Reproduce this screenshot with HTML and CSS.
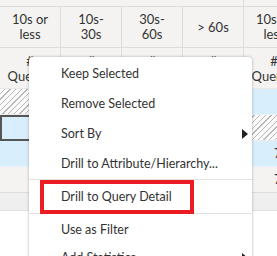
FILE: index.html
```html
<!DOCTYPE html>
<html>
<head>
<meta charset="utf-8">
<link rel="stylesheet" href="styles.css">
</head>
<body>
<div class="table">
  <div class="strip wide"></div>
  <div class="strip"></div>

  <div class="hcell">10s or<br>less</div>
  <div class="hcell">10s-<br>30s</div>
  <div class="hcell">30s-<br>60s</div>
  <div class="hcell">&gt; 60s</div>
  <div class="hcell">10s or<br>less</div>

  <div class="hcell h2">#<br>Queries</div>
  <div class="hcell h2">#<br>Queries</div>
  <div class="hcell h2">#<br>Queries</div>
  <div class="hcell h2">#<br>Queries</div>
  <div class="hcell h2 last">#<br>Queries</div>

  <div class="cell hatch"></div>
  <div class="cell blue"></div>
  <div class="cell blue"></div>
  <div class="cell blue"></div>
  <div class="cell blue"></div>

  <div class="cell blue selected"></div>
  <div class="cell blue"></div>
  <div class="cell blue"></div>
  <div class="cell blue"></div>
  <div class="cell hatch"></div>

  <div class="cell blue"></div>
  <div class="cell blue"></div>
  <div class="cell blue"></div>
  <div class="cell blue"></div>
  <div class="cell blue num">7</div>

  <div class="cell grey"></div>
  <div class="cell grey"></div>
  <div class="cell grey"></div>
  <div class="cell grey"></div>
  <div class="cell grey num">7</div>

  <div class="cell total"></div>
  <div class="cell total"></div>
  <div class="cell total"></div>
  <div class="cell total"></div>
  <div class="cell total"></div>
</div>

<div class="menu">
  <div class="item">Keep Selected</div>
  <div class="item">Remove Selected</div>
  <div class="item sub">Sort By</div>
  <div class="item">Drill to Attribute/Hierarchy...</div>
  <div class="sep"></div>
  <div class="item highlighted">Drill to Query Detail<span class="callout"></span></div>
  <div class="sep"></div>
  <div class="item short">Use as Filter</div>
  <div class="item sub">Add Statistics</div>
</div>
</body>
</html>
```
FILE: styles.css
```css
html, body {
  margin: 0;
  padding: 0;
  background: #ffffff;
  overflow: hidden;
}
body {
  width: 277px;
  height: 256px;
  position: relative;
  font-family: Lato, "Noto Sans", sans-serif;
  color: #333333;
}
.table {
  display: grid;
  grid-template-columns: repeat(5, 61px);
  grid-template-rows: 7px 41px 41px 26px 26px 26px 26px 18px;
  width: 305px;
}
.strip {
  background: #f4f3f1;
  border-bottom: 1px solid #dddcda;
}
.strip.wide {
  grid-column: span 4;
  border-right: 1px solid #dddcda;
}
.hcell {
  background: #f4f3f1;
  border-right: 1px solid #dddcda;
  border-bottom: 1px solid #dddcda;
  display: flex;
  align-items: center;
  justify-content: center;
  text-align: center;
  font-size: 13px;
  line-height: 15px;
  color: #333333;
}
.hcell.h2 {
  border-bottom: 1px solid #e8e7e5;
  padding-top: 1px;
}
.cell {
  border-bottom: 1px solid #ececec;
  font-size: 13px;
  line-height: 25px;
  color: #333333;
}
.blue {
  background: #d9eefc;
  border-bottom-color: #e6f3fc;
}
.grey {
  background: #f4f3f1;
  border-bottom-color: #dcdcdc;
}
.total {
  background: #efefef;
  border-bottom-color: #e2e2e2;
}
.hatch {
  background-color: #fbfbfb;
  background-image: repeating-linear-gradient(135deg, #fbfbfb 0 3px, #b8b8b8 3px 4px);
}
.selected {
  border: 2px solid #555555;
  border-right: none;
}
.num {
  padding-left: 30px;
}
.menu {
  position: absolute;
  left: 29px;
  top: 57px;
  width: 223px;
  height: 230px;
  background: #ffffff;
  border-radius: 4px;
  box-shadow: 0 0 3px rgba(0, 0, 0, 0.3);
  padding-top: 2px;
}
.item {
  height: 30px;
  line-height: 30px;
  padding-left: 32px;
  font-size: 12.5px;
  color: #333333;
  white-space: nowrap;
  position: relative;
}
.item.short {
  height: 27px;
  line-height: 28px;
}
.sub::after {
  content: "";
  position: absolute;
  right: 4px;
  top: 10px;
  border-left: 6px solid #222222;
  border-top: 5px solid transparent;
  border-bottom: 5px solid transparent;
}
.sep {
  height: 1px;
  background: #e2e2e2;
  margin: 0 0 2px;
}
.sep + .item + .sep {
  margin-top: 1px;
}
.callout {
  position: absolute;
  left: 11px;
  top: -2px;
  width: 146px;
  height: 26px;
  border: 4px solid #ec1c24;
}
```
